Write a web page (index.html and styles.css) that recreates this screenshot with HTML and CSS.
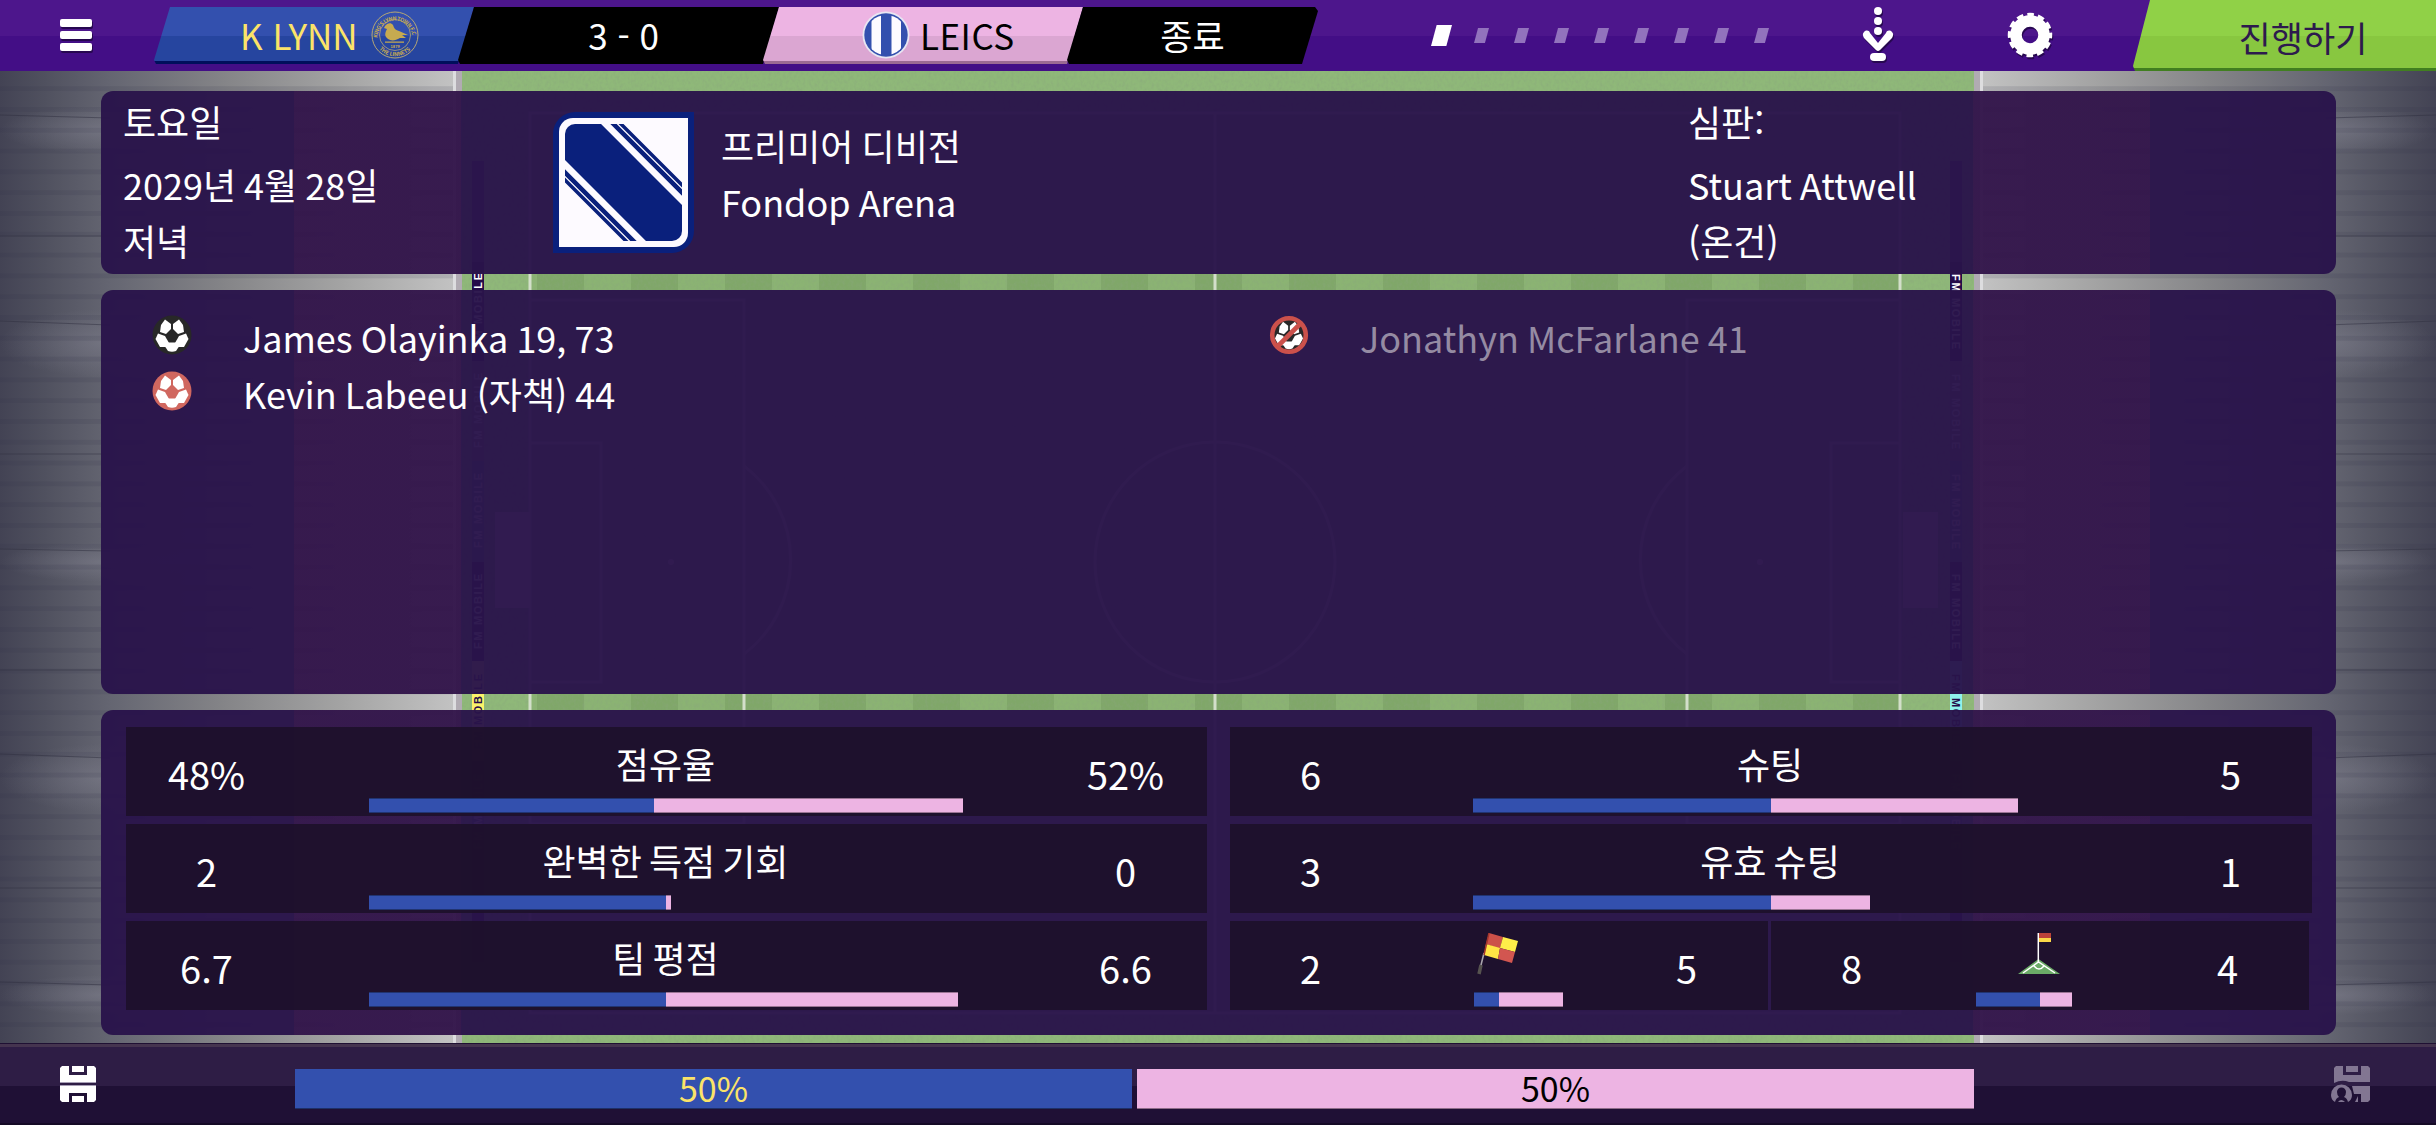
FILE: index.html
```html
<!DOCTYPE html>
<html lang="ko">
<head>
    <meta charset="UTF-8">
    <meta name="viewport" content="width=device-width, initial-scale=1.0">
    <title>K LYNN 3 - 0 LEICS</title>
    <link rel="stylesheet" href="styles.css">
</head>
<body>
    <!-- Stadium behind the panels -->
    <svg class="stadium" viewBox="0 0 2436 1125" aria-hidden="true">
        <defs>
            <linearGradient id="stand" x1="0" x2="1" y1="0" y2="0">
                <stop offset="0" stop-color="#434354"/>
                <stop offset=".1" stop-color="#50515f"/>
                <stop offset=".24" stop-color="#646571"/>
                <stop offset=".5" stop-color="#858588"/>
                <stop offset=".75" stop-color="#a3a3a3"/>
                <stop offset="1" stop-color="#c2c2c2"/>
            </linearGradient>
            <radialGradient id="glow">
                <stop offset="0" stop-color="#8a8a98" stop-opacity=".4"/>
                <stop offset="1" stop-color="#8a8a98" stop-opacity="0"/>
            </radialGradient>
            <pattern id="steps" width="461" height="20.8" patternUnits="userSpaceOnUse" y="3">
                <rect width="461" height="5" fill="#2c2c44" opacity=".13"/>
            </pattern>
            <pattern id="mown" width="94" height="1125" patternUnits="userSpaceOnUse" x="913">
                <rect width="47" height="1125" fill="#6d9057" opacity=".35"/>
            </pattern>
            <filter id="grain" x="0" y="0" width="100%" height="100%">
                <feTurbulence type="fractalNoise" baseFrequency=".35 .25" numOctaves="2" seed="4"/>
                <feColorMatrix values="0 0 0 0 .25  0 0 0 0 .38  0 0 0 0 .2  0 0 0 1.3 -.5"/>
            </filter>
            <g id="half-stand">
                <rect width="453" height="1125" fill="url(#stand)"/>
                <ellipse cx="100" cy="130" rx="100" ry="24" fill="url(#glow)"/>
                <ellipse cx="100" cy="343" rx="100" ry="34" fill="url(#glow)"/>
                <ellipse cx="100" cy="562" rx="100" ry="20" fill="url(#glow)"/>
                <ellipse cx="100" cy="778" rx="100" ry="34" fill="url(#glow)"/>
                <ellipse cx="100" cy="995" rx="100" ry="20" fill="url(#glow)"/>
                <rect width="453" height="1125" fill="url(#steps)"/>
                <path d="M0 115l110 3M0 236h110M0 321l110 4M0 454h110M0 549l110 2M0 670h110M0 754l110 4M0 888h110M0 982l110 3" stroke="#2f2f40" stroke-opacity=".5" fill="none"/>
                <rect x="453" width="9" height="1125" fill="#b1abb3"/>
                <rect x="453" width="3" height="1125" fill="#dddddf"/>
            </g>
            <g id="boards">
                <rect y="161" width="12" height="101" fill="#5a3a78"/>
                <rect y="262" width="12" height="99" fill="#250c4a"/>
                <rect y="361" width="12" height="100" fill="#8a8a6a"/>
                <rect y="461" width="12" height="101" fill="#5c8f8d"/>
                <rect y="562" width="12" height="99" fill="#250c4a"/>
                <rect y="761" width="12" height="100" fill="#5c8f8d"/>
                <rect y="861" width="12" height="101" fill="#250c4a"/>
            </g>
        </defs>

        <rect width="2436" height="1125" fill="#8fb879"/>
        <rect x="530" y="113" width="1370" height="900" fill="#8bb373"/>
        <rect x="530" y="113" width="1370" height="900" fill="url(#mown)"/>
        <rect x="461" width="1512" height="1125" filter="url(#grain)" opacity=".7"/>
        <use href="#half-stand"/>
        <use href="#half-stand" transform="translate(2436) scale(-1 1)"/>

        <g class="lines">
            <path d="M530 113H1900V1013H530zM1215 113V1013M530 300H744V824H530M1900 300H1687V824H1900M530 443H601V682H530M1900 443H1831V682H1900"/>
            <circle cx="1215" cy="562" r="120"/>
            <path d="M744 466a118 118 0 0 1 0 188M1687 466a118 118 0 0 0 0 188"/>
        </g>
        <g fill="#f4e4dc">
            <rect x="495" y="512" width="35" height="96"/>
            <rect x="1903" y="512" width="35" height="96"/>
            <circle cx="671" cy="562" r="3"/>
            <circle cx="1760" cy="562" r="3"/>
        </g>

        <use href="#boards" x="472"/>
        <use href="#boards" x="1950"/>
        <rect x="472" y="661" width="12" height="100" fill="#fbf36a"/>
        <rect x="1950" y="661" width="12" height="100" fill="#8ff2ec"/>
        <g class="ads">
            <text transform="translate(482 348) rotate(-90)" textLength="75">FM MOBILE</text>
            <text transform="translate(482 448) rotate(-90)" textLength="75">FM MOBILE</text>
            <text transform="translate(482 548) rotate(-90)" textLength="75">FM MOBILE</text>
            <text transform="translate(482 649) rotate(-90)" textLength="75">FM MOBILE</text>
            <text transform="translate(482 749) rotate(-90)" textLength="75" class="dark">FM MOBILE</text>
            <text transform="translate(482 849) rotate(-90)" textLength="75">FM MOBILE</text>
            <text transform="translate(1952 274) rotate(90)" textLength="75">FM MOBILE</text>
            <text transform="translate(1952 374) rotate(90)" textLength="75">FM MOBILE</text>
            <text transform="translate(1952 474) rotate(90)" textLength="75">FM MOBILE</text>
            <text transform="translate(1952 574) rotate(90)" textLength="75">FM MOBILE</text>
            <text transform="translate(1952 674) rotate(90)" textLength="75" class="dark">FM MOBILE</text>
            <text transform="translate(1952 774) rotate(90)" textLength="75">FM MOBILE</text>
        </g>
    </svg>

    <header class="topbar">
        <div class="menu">
            <span></span>
            <span></span>
            <span></span>
        </div>
        <div class="tabs">
            <div class="tab home">
                <span>K LYNN</span>
                <svg class="crest" viewBox="-24 -24 48 48">
                    <defs>
                        <path id="arc-top" d="M-17.5 3a17.5 17.5 0 1 1 35 0"/>
                        <path id="arc-bottom" d="M-16 14a21.300 21.300 0 0 0 32 0"/>
                    </defs>
                    <g fill="none" stroke="#b5a675">
                        <circle r="23"/>
                        <circle r="15.5" stroke-width=".8"/>
                    </g>
                    <g fill="#c6aa50">
                        <path d="M-10-9c2-3 6-4 8-1 1 3 2 5 6 6l9 4-6 0 4 3h-6c-5 3-9 3-12 1-4-3-3-6-1-10l-3-1z"/>
                        <path d="M-10 6.500H9v1.300H-10z"/>
                        <text class="crest-text"><textPath href="#arc-top" textLength="52">KING'S LYNN TOWN F.C</textPath></text>
                        <text class="crest-text"><textPath href="#arc-bottom" textLength="35">THE LINNETS</textPath></text>
                        <text class="crest-text year" x="-4.500" y="13">1879</text>
                    </g>
                </svg>
            </div>
            <div class="tab score">3 - 0</div>
            <div class="tab away">
                <svg class="crest" viewBox="-24 -24 48 48">
                    <circle r="23.500" fill="#e8e6f2"/>
                    <clipPath id="disc"><circle r="20"/></clipPath>
                    <circle r="21.700" fill="#3350ae"/>
                    <g clip-path="url(#disc)" fill="#fdfbff">
                        <rect x="-14.500" y="-24" width="9.500" height="48"/>
                        <rect x="5.500" y="-24" width="9.500" height="48"/>
                    </g>
                </svg>
                <span>LEICS</span>
            </div>
            <div class="tab status">종료</div>
        </div>
        <div class="pager">
            <i class="current"></i>
            <i></i>
            <i></i>
            <i></i>
            <i></i>
            <i></i>
            <i></i>
            <i></i>
            <i></i>
        </div>
        <svg class="skip" viewBox="0 0 34 58">
            <g fill="#fff">
                <circle cx="17" cy="5" r="4"/>
                <circle cx="17" cy="15" r="4"/>
                <circle cx="17" cy="25" r="4"/>
                <path d="M3 26c2-2 5-2 6 1l8 10 8-10c1-3 4-3 6-1 2 2 1 4 0 6L19 44q-2 2-4 0L3 32c-1-2-2-4 0-6z"/>
                <rect x="9" y="47" width="16" height="8" rx="4"/>
            </g>
        </svg>
        <svg class="gear" viewBox="-24 -24 48 48">
            <circle r="14" fill="none" stroke="#fff" stroke-width="11.500"/>
            <circle r="20" fill="none" stroke="#fff" stroke-width="4.500" stroke-dasharray="6.500 3.972" stroke-dashoffset="3.250"/>
        </svg>
        <button class="continue">진행하기</button>
    </header>

    <main class="content">
        <section class="panel info">
            <div class="info-date">
                <p class="first">토요일</p>
                <p>2029년 4월 28일</p>
                <p>저녁</p>
            </div>
            <div class="info-venue">
                <svg class="league" viewBox="0 0 141 141">
                    <clipPath id="field"><path d="M22 12H129V119a10 10 0 0 1-10 10H12V22A10 10 0 0 1 22 12z"/></clipPath>
                    <path d="M22 0H141V119a22 22 0 0 1-22 22H0V22A22 22 0 0 1 22 0z" fill="#0a207c"/>
                    <path d="M20 6H135V121a14 14 0 0 1-14 14H6V20A14 14 0 0 1 20 6z" fill="#fdfaff"/>
                    <g clip-path="url(#field)" stroke="#0a207c">
                        <path d="M-20-20L161 161" stroke-width="51"/>
                        <path d="M28.500-20L209.500 161M-20 28.500L161 209.500" stroke-width="4.500"/>
                        <path d="M36-20L217 161M-20 36L161 217" stroke-width="3.500"/>
                    </g>
                </svg>
                <div>
                    <p>프리미어 디비전</p>
                    <p>Fondop Arena</p>
                </div>
            </div>
            <div class="info-referee">
                <p class="first">심판:</p>
                <p>Stuart Attwell</p>
                <p>(온건)</p>
            </div>
        </section>

        <section class="panel events">
            <svg width="0" height="0" class="symbols">
                <symbol id="ball" viewBox="-20 -20 40 40">
                    <circle r="19.500"/>
                    <g fill="#fff">
                        <path d="M-7-15.500l6 4.500v5l-5 5-6-2 1-7z"/>
                        <path d="M7-15.500l-6 4.500v5l5 5 6-2-1-7z"/>
                        <path d="M-14-1.500l7 2.500 4 7-2 4-7 0-4.500-8z"/>
                        <path d="M14-1.500l-7 2.500-4 7 2 4 7 0 4.500-8z"/>
                        <path d="M-5 7.500H5l2 4-3 4.500q-4 1.500-8 0l-3-4.500z"/>
                    </g>
                </symbol>
            </svg>
            <ul class="event-list">
                <li>
                    <svg class="goal"><use href="#ball"/></svg>
                    <span>James Olayinka 19, 73</span>
                </li>
                <li>
                    <svg class="goal own"><use href="#ball"/></svg>
                    <span>Kevin Labeeu (자책) 44</span>
                </li>
            </ul>
            <ul class="event-list">
                <li class="disallowed">
                    <svg class="goal" viewBox="-20 -20 40 40">
                        <use href="#ball" x="-17" y="-17" width="34" height="34"/>
                        <g fill="none" stroke="#cb514b" stroke-width="4.600">
                            <circle r="16.800"/>
                            <path d="M-12 12L12-12"/>
                        </g>
                    </svg>
                    <span>Jonathyn McFarlane 41</span>
                </li>
            </ul>
        </section>

        <section class="panel stats">
            <div class="stat">
                <b>48%</b>
                <div class="middle">
                    <p>점유율</p>
                    <div class="bar"><i class="h" style="width: 47.9%"></i><i class="a" style="width: 52%"></i></div>
                </div>
                <b>52%</b>
            </div>
            <div class="stat">
                <b>6</b>
                <div class="middle">
                    <p>슈팅</p>
                    <div class="bar"><i class="h" style="width: 50%"></i><i class="a" style="width: 41.5%"></i></div>
                </div>
                <b>5</b>
            </div>
            <div class="stat">
                <b>2</b>
                <div class="middle">
                    <p>완벽한 득점 기회</p>
                    <div class="bar"><i class="h" style="width: 49.85%"></i><i class="a" style="width: 0.9%"></i></div>
                </div>
                <b>0</b>
            </div>
            <div class="stat">
                <b>3</b>
                <div class="middle">
                    <p>유효 슈팅</p>
                    <div class="bar"><i class="h" style="width: 50%"></i><i class="a" style="width: 16.6%"></i></div>
                </div>
                <b>1</b>
            </div>
            <div class="stat">
                <b>6.7</b>
                <div class="middle">
                    <p>팀 평점</p>
                    <div class="bar"><i class="h" style="width: 49.85%"></i><i class="a" style="width: 49.1%"></i></div>
                </div>
                <b>6.6</b>
            </div>
            <div class="pair">
                <div class="stat">
                    <b>2</b>
                    <div class="middle">
                        <!-- offside flag -->
                        <svg class="stat-icon" viewBox="0 0 42 42">
                            <path d="M7 20L3 36" stroke="#aaa6ad" stroke-width="1.500"/>
                            <path d="M4 32l-2 9" stroke="#56534f" stroke-width="3.500"/>
                            <path d="M12 0l14 4-3 12L9 11z" fill="#cc5149"/>
                            <path d="M26 4l15 4-3 11-15-4z" fill="#ffee49"/>
                            <path d="M9 11l14 4-2 11L7 22z" fill="#ffe445"/>
                            <path d="M23 15l15 4-3 11-14-4z" fill="#d25650"/>
                            <path d="M12 0L7 22" stroke="#a3352c" stroke-width="1.500"/>
                        </svg>
                        <div class="bar small"><i class="h" style="width: 25px"></i><i class="a" style="width: 64px"></i></div>
                    </div>
                    <b>5</b>
                </div>
                <div class="stat">
                    <b>8</b>
                    <div class="middle">
                        <!-- corner flag -->
                        <svg class="stat-icon" viewBox="0 0 42 42">
                            <path d="M0 41L20.500 26 42 41z" fill="#6bab67"/>
                            <path d="M5 40L20.500 29 37 40M16 33q5 6 10 0" fill="none" stroke="#fff" stroke-width="1.500"/>
                            <path d="M20.300 0V29" stroke="#fff" stroke-width="1.500"/>
                            <path d="M21 0H33V5H21z" fill="#bb433a"/>
                            <path d="M21 5H33V9H21z" fill="#fbd848"/>
                        </svg>
                        <div class="bar small"><i class="h" style="width: 64px"></i><i class="a" style="width: 32px"></i></div>
                    </div>
                    <b>4</b>
                </div>
            </div>
        </section>
    </main>

    <footer class="bottombar">
        <svg class="save" viewBox="0 0 36 36">
            <path d="M2 0H9V9H27V0H34L36 2V16H0V2z" fill="#fff"/>
            <path d="M12 0H24V6H12z" fill="#fff"/>
            <path d="M0 20H36V34L34 36H27V27H9V36H2L0 34z" fill="#fff"/>
            <path d="M12 30H24V36H12z" fill="#fff"/>
            <path d="M0 16.500H36M0 19.500H36" stroke="#a79fb5"/>
        </svg>
        <div class="possession">
            <div class="h">50%</div>
            <div class="a">50%</div>
        </div>
        <svg class="save disabled" viewBox="0 0 39 36">
            <g fill="#827692">
                <path d="M5 0H12V9H30V0H37L39 2V16H18Q11 13 3 17V2z"/>
                <path d="M15 0H27V6H15z"/>
                <path d="M21 20H39V34L37 36H30V28H23z"/>
                <path d="M24 36l3-6v6z"/>
                <path fill-rule="evenodd" d="M0 29a10.500 10.500 0 0 1 21 0q0 5-4 7-1-4-4-5 2-2 2-5a4.500 4.500 0 0 0-9 0q0 3 2 5-3 1-4 5-4-2-4-7zM7 36q3-4 7 0z"/>
            </g>
        </svg>
    </footer>
</body>
</html>
```

FILE: styles.css
```css
* {
    box-sizing: border-box;
}
body {
    display: flex;
    flex-direction: column;
    width: 2436px;
    height: 1125px;
    margin: 0;
    overflow: hidden;
    background-color: #2e1c45;
    color: #ffffff;
    font-family: "Noto Sans CJK KR", sans-serif;
    font-size: 36px;
    line-height: 56px;
}
p,
ul {
    margin: 0;
    padding: 0;
    list-style: none;
}
svg {
    display: block;
    flex: none;
}

/* stadium */
.stadium {
    position: absolute;
    top: 0;
    left: 0;
    width: 2436px;
    height: 1125px;
    z-index: -1;
}
.lines {
    fill: none;
    stroke: #d3dfca;
    stroke-width: 3;
}
.ads {
    fill: #ffffff;
    font-family: "Liberation Sans", sans-serif;
    font-size: 11px;
    font-weight: bold;
}
.ads .dark {
    fill: #250c4a;
}

/* top bar */
.topbar {
    display: flex;
    align-items: flex-start;
    height: 71px;
    background: linear-gradient(#4d168c 36px, #430e86 36px);
    font-size: 35px;
}
.menu {
    display: flex;
    flex-direction: column;
    gap: 4px;
    width: 154px;
    padding: 19px 0 0 60px;
}
.menu span {
    width: 32px;
    height: 8px;
    border-radius: 2px;
    background-color: #ffffff;
    box-shadow: 1px 2px 0 #270850;
}
.tabs {
    display: flex;
    padding-top: 7px;
}
.tab {
    display: flex;
    justify-content: center;
    align-items: center;
    width: 320px;
    height: 57px;
    margin-right: -16px;
    padding-bottom: 2px;
    clip-path: polygon(16px 0, 100% 0, calc(100% - 16px) 100%, 2px 100%, 0 53px);
}
.home {
    justify-content: flex-start;
    gap: 13px;
    padding-left: 86px;
    background: linear-gradient(#3350ae 29px, #26459f 29px, #26459f 54px, #000f5c 54px);
    color: #fbe368;
}
.score,
.status {
    background-color: #000000;
}
.score {
    width: 321px;
    padding-left: 10px;
}
.away {
    justify-content: flex-start;
    gap: 10px;
    padding-left: 99px;
    background: linear-gradient(#edb4e3 29px, #dba6d2 29px, #dba6d2 54px, #9c6a93 54px);
    color: #000000;
}
.away span {
    letter-spacing: 0.5px;
}
.status {
    width: 251px;
    clip-path: polygon(16px 0, calc(100% - 3px) 0, 100% 4px, calc(100% - 16px) 100%, 2px 100%, 0 53px);
}
.crest {
    width: 48px;
    height: 48px;
}
.crest-text {
    font-size: 5.5px;
    font-weight: bold;
}
.year {
    font-size: 4px;
}
.pager {
    display: flex;
    align-items: center;
    gap: 25px;
    width: 323px;
    height: 71px;
    margin-left: 129px;
}
.pager i {
    flex: none;
    width: 15px;
    height: 15px;
    background-color: #9273bd;
    clip-path: polygon(27% 0, 100% 0, 73% 100%, 0 100%);
}
.pager .current {
    width: 21px;
    height: 21px;
    margin-right: -3px;
    background-color: #ffffff;
}
.skip {
    width: 34px;
    height: 58px;
    margin: 6px 0 0 107px;
    filter: drop-shadow(1px 2px 0 #270850);
}
.gear {
    width: 48px;
    height: 48px;
    margin: 11px 0 0 111px;
    filter: drop-shadow(1px 2px 0 #270850);
}
.continue {
    width: 303px;
    height: 71px;
    margin-left: auto;
    padding: 3px 0 0 37px;
    border: none;
    background: linear-gradient(#90d147 36px, #88c740 36px, #88c740 68px, #417f20 68px);
    color: #2d1a4d;
    font: inherit;
    clip-path: polygon(17px 0, 100% 0, 100% 100%, 2px 100%, 0 66px);
}

/* panels */
.content {
    display: flex;
    flex-direction: column;
    gap: 16px;
    width: 2235px;
    height: 972px;
    padding-top: 20px;
    margin-left: 101px;
}
.panel {
    display: flex;
    border-radius: 12px;
    background-color: rgba(41, 20, 75, 0.965);
    background-image: linear-gradient(90deg, transparent 193px, rgba(70, 28, 77, 0.35) 193px, rgba(70, 28, 77, 0.35) 360px, transparent 360px, transparent 1872px, rgba(70, 28, 77, 0.35) 1872px, rgba(70, 28, 77, 0.35) 2049px, transparent 2049px);
    word-spacing: -2px;
}
.info {
    height: 183px;
    padding: 2px 21px 2px 22px;
}
.info .first {
    margin-bottom: 7px;
}
.info-date {
    width: 430px;
}
.info-venue {
    display: flex;
    width: 1135px;
    padding-top: 24px;
}
.league {
    width: 141px;
    height: 141px;
    margin: -5px 27px 0 0;
}
.events {
    height: 404px;
    padding-top: 19px;
}
.symbols {
    position: absolute;
}
.event-list {
    width: 1117px;
    padding-left: 51px;
}
.event-list li {
    display: flex;
}
.goal {
    width: 40px;
    height: 40px;
    margin: 6px 51px 0 0;
    fill: #282828;
}
.own {
    fill: #d0675f;
}
.disallowed span {
    color: #958ba3;
}

/* stats */
.stats {
    display: grid;
    grid-template-columns: 1081px 1082px;
    grid-auto-rows: 89px;
    gap: 8px 23px;
    height: 325px;
    padding: 17px 24px 25px 25px;
}
.stat {
    display: grid;
    grid-template-columns: 161px 1fr 163px;
    background-color: rgba(29, 16, 42, 0.92);
    text-align: center;
}
.stat b {
    padding-top: 19px;
    font-size: 38px;
    font-weight: normal;
}
.middle p {
    height: 63px;
    margin-top: 8px;
    word-spacing: -3px;
}
.bar {
    display: flex;
    height: 15px;
    margin: 0 80px 0 82px;
}
.bar i {
    border-top: 1px solid rgba(0, 0, 0, 0.35);
    border-bottom: 1px solid rgba(0, 0, 0, 0.35);
}
.h {
    background-color: #3350ae;
}
.a {
    background-color: #edb4e3;
}
.pair {
    display: grid;
    grid-template-columns: 538px 538px;
    gap: 3px;
}
.stat-icon {
    width: 42px;
    height: 42px;
    margin: 12px auto 17px;
}
.small {
    display: grid;
    grid-template-columns: 64px 64px;
    margin: 0 42px 0 44px;
}
.small .h {
    justify-self: end;
}

/* bottom bar */
.bottombar {
    display: flex;
    align-items: flex-start;
    height: 82px;
    padding: 23px 66px 0 60px;
    background: linear-gradient(#1f1033 1px, #45344f 1px, #45344f 4px, #2e1d45 4px, #2e1d45 43px, #1f1035 43px, #1f1035 80px, #150a26 80px);
}
.save {
    width: 36px;
    height: 36px;
}
.possession {
    display: flex;
    gap: 5px;
    margin: 3px 0 0 199px;
}
.possession div {
    width: 837px;
    height: 40px;
    padding-top: 1px;
    border-bottom: 1px solid rgba(0, 0, 0, 0.4);
    font-size: 34px;
    line-height: 36px;
    text-align: center;
}
.possession .h {
    color: #fbe368;
}
.possession .a {
    color: #000000;
}
.disabled {
    width: 39px;
    margin-left: auto;
}
```
